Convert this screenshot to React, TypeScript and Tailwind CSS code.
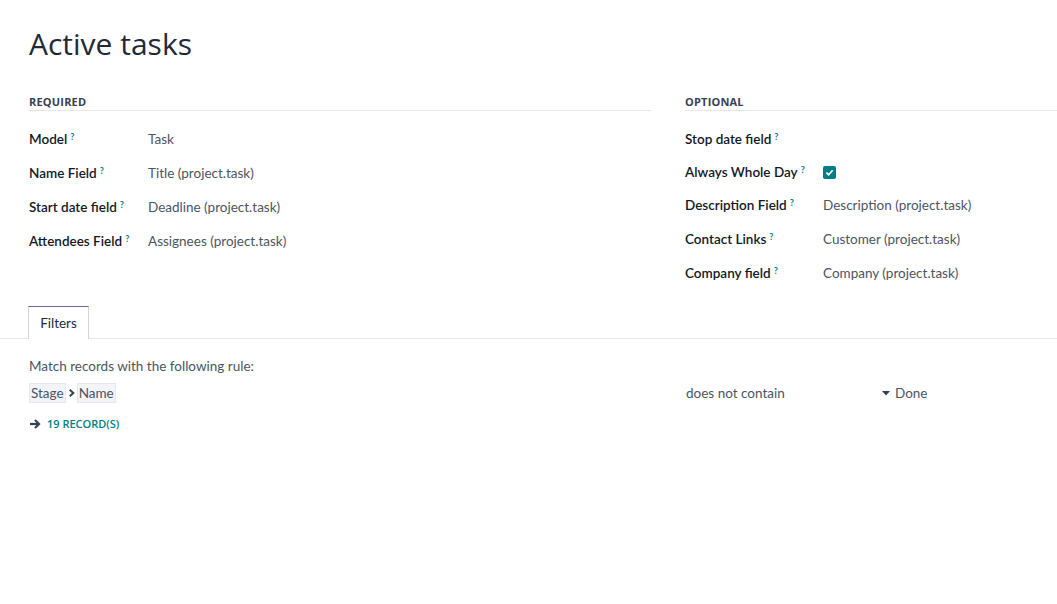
import React from "react";

const font = { fontFamily: 'Lato, "Open Sans", sans-serif' };
const open = { fontFamily: '"Open Sans", sans-serif' };

function Help() {
  return <sup className="ml-[3px] text-[9px] font-bold text-[#017e84] relative -top-[4px]">?</sup>;
}

function Field({ label, labelW, h, children }: { label: string; labelW: string; h: string; children?: React.ReactNode }) {
  return (
    <div className={`flex items-start ${h}`}>
      <div className={`${labelW} shrink-0 font-semibold text-[#111827] leading-[20px]`}>
        {label}
        <Help />
      </div>
      <div className="text-[#4b5563] leading-[20px]">{children}</div>
    </div>
  );
}

export default function App() {
  return (
    <div style={font} className="bg-white w-[1057px] h-[604px] text-[13.5px] text-[#374151] overflow-hidden">
      <div className="pl-[29px] pt-[22px]">
        <h1 style={open} className="text-[30px] leading-[44px] text-[#1f2937] font-normal">
          Active tasks
        </h1>
      </div>

      <div className="flex pl-[29px] mt-[27px]">
        <div className="w-[622px]">
          <div style={open} className="text-[11px] leading-[16px] font-bold text-[#374151] tracking-[0.2px] pt-[1px] border-b border-[#e5e7eb]">REQUIRED</div>
          <div className="pt-[18px]">
            <Field h="h-[34px]" labelW="w-[119px]" label="Model">Task</Field>
            <Field h="h-[34px]" labelW="w-[119px]" label="Name Field">Title (project.task)</Field>
            <Field h="h-[34px]" labelW="w-[119px]" label="Start date field">Deadline (project.task)</Field>
            <Field h="h-[34px]" labelW="w-[119px]" label="Attendees Field">Assignees (project.task)</Field>
          </div>
        </div>
        <div className="ml-[34px] flex-1">
          <div style={open} className="text-[11px] leading-[16px] font-bold text-[#374151] tracking-[0.2px] pt-[1px] border-b border-[#e5e7eb]">OPTIONAL</div>
          <div className="pt-[18px]">
            <Field h="h-[33px]" labelW="w-[138px]" label="Stop date field" />
            <Field h="h-[33px]" labelW="w-[138px]" label="Always Whole Day">
              <div className="pt-[4px]">
                <div className="w-[13px] h-[13px] bg-[#017e84] rounded-[2px] flex items-center justify-center">
                  <svg width="9" height="9" viewBox="0 0 10 10">
                    <path d="M1.5 5.2 L4 7.5 L8.5 2.5" stroke="white" strokeWidth="2" fill="none" />
                  </svg>
                </div>
              </div>
            </Field>
            <Field h="h-[34px]" labelW="w-[138px]" label="Description Field">Description (project.task)</Field>
            <Field h="h-[34px]" labelW="w-[138px]" label="Contact Links">Customer (project.task)</Field>
            <Field h="h-[34px]" labelW="w-[138px]" label="Company field">Company (project.task)</Field>
          </div>
        </div>
      </div>

      {/* notebook tabs */}
      <div className="mt-[9px] border-b border-[#e5e7eb] pl-[28px] flex">
        <div className="h-[33px] w-[61px] justify-center flex items-center border border-b-0 border-[#d1d5db] border-t-[#71639e] bg-white -mb-px text-[#1f2937]">
          Filters
        </div>
      </div>

      <div className="pl-[29px] pt-[18px]">
        <div className="text-[#4b5563] leading-[18px]">Match records with the following rule:</div>
        <div className="flex items-center mt-[7px] h-[22px]">
          <div className="flex items-center w-[657px]">
            <span className="bg-[#f3f4f8] border border-[#e5e7eb] px-[1px] leading-[18px] text-[#4b5563]">Stage</span>
            <svg width="9" height="10" viewBox="0 0 10 10" className="mx-[1px]">
              <path d="M3 1.5 L7 5 L3 8.5" stroke="#374151" strokeWidth="2.2" fill="none" />
            </svg>
            <span className="bg-[#f3f4f8] border border-[#e5e7eb] px-[1px] leading-[18px] text-[#4b5563]">Name</span>
          </div>
          <div className="w-[196px] text-[#4b5563] pt-[1px]">does not contain</div>
          <div className="flex items-center text-[#4b5563] pt-[1px]">
            <svg width="8" height="5" viewBox="0 0 8 5" className="mr-[5px]"><path d="M0 0 H8 L4 4.5Z" fill="#374151" /></svg>
            Done
          </div>
        </div>
        <div className="flex items-center mt-[11px] h-[18px]">
          <svg width="12" height="12" viewBox="0 0 12 12" className="mr-[6px]">
            <path d="M1 6 H9" stroke="#374151" strokeWidth="2.2" />
            <path d="M6 2 L10 6 L6 10" stroke="#374151" strokeWidth="2.2" fill="none" />
          </svg>
          <span style={open} className="text-[11px] font-semibold text-[#017e84]">19 RECORD(S)</span>
        </div>
      </div>
    </div>
  );
}
